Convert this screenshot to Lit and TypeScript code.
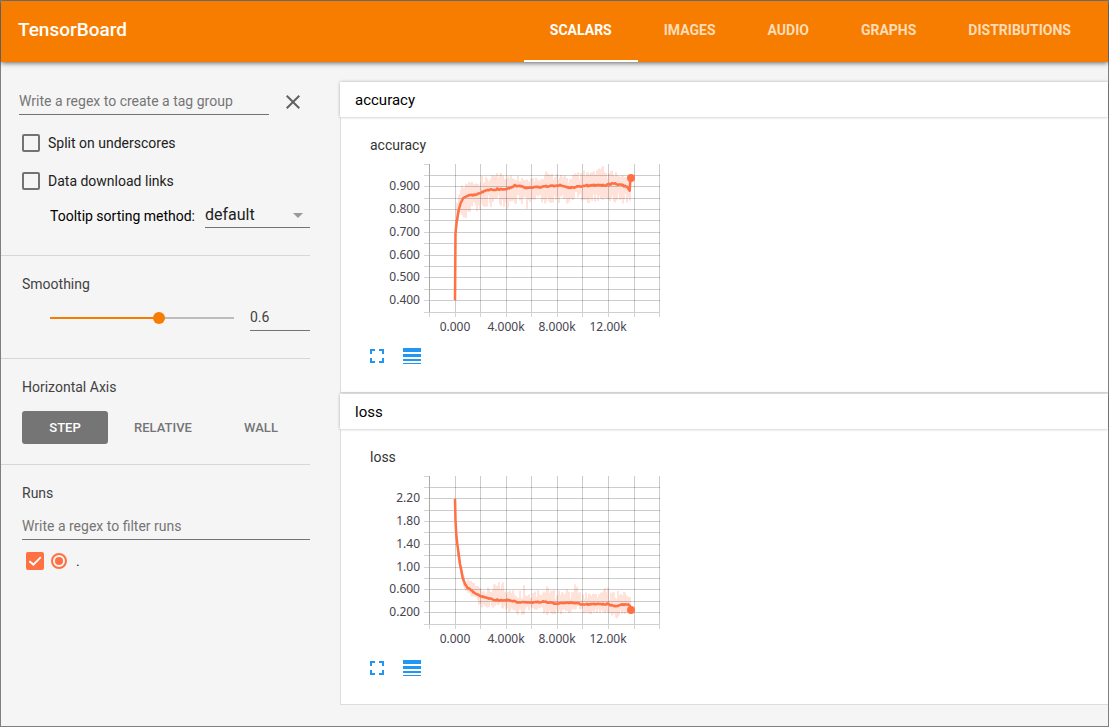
import { LitElement, html, css, svg } from "lit";
import { customElement, property, state } from "lit/decorators.js";
import { classMap } from "lit/directives/class-map.js";

type Point = [number, number];

interface ChartData {
  name: string;
  yLabels: string[];
  trend: Point[];
  upper: Point[];
  lower: Point[];
  wobble: number;
  floor: number;
}

const GRID_X = [59, 85, 110, 136, 161, 187, 212, 238, 264, 289];
const GRID_Y = [4, 15, 26, 38, 49, 60, 72, 83, 95, 106, 117, 129, 140, 152];
const X_LABELS = ["0.000", "4.000k", "8.000k", "12.00k"];

const CHARTS: ChartData[] = [
  {
    name: "accuracy",
    yLabels: ["0.900", "0.800", "0.700", "0.600", "0.500", "0.400"],
    trend: [
      [85, 140], [85.5, 73], [86.5, 63], [88.7, 50], [90.7, 43], [93.3, 38], [97, 36],
      [105, 34.5], [112, 32], [118, 30], [127, 29.3], [137, 29], [145, 25.7], [150, 25.7],
      [155, 28], [165, 27], [170, 27], [190, 25.3], [198, 27.3], [205, 27.3], [213, 25.7],
      [237, 25], [243, 23.5], [252, 25], [257, 26.7], [259.7, 30.7], [260.5, 18],
    ],
    upper: [
      [86, 60], [87, 42], [89, 30], [91, 24], [93, 18], [95, 24], [101, 21], [110, 22], [112, 9],
      [115, 17], [122, 15], [135, 9], [137, 15], [145, 14], [155, 16], [165, 16], [175, 15],
      [177, 4], [179, 13], [190, 14], [200, 16], [212, 10], [222, 11], [233, 5], [236, 12],
      [243, 10], [250, 13], [259, 16],
    ],
    lower: [
      [86, 76], [88, 64], [92, 57], [96, 59], [99, 53], [110, 53], [115, 48], [125, 47],
      [131, 50], [138, 49], [150, 42], [158, 51], [163, 43], [180, 44], [195, 44], [203, 47],
      [212, 41], [225, 45], [240, 42], [253, 46], [259, 42],
    ],
    wobble: 1.4,
    floor: 0.4,
  },
  {
    name: "loss",
    yLabels: ["2.20", "1.80", "1.40", "1.00", "0.600", "0.200"],
    trend: [
      [85, 27], [85.5, 48], [86.3, 63], [87.3, 72], [90, 92], [91.3, 98], [92.7, 106],
      [95, 112], [97.3, 115.7], [103, 119.7], [110.7, 124], [118, 126.3], [128, 128.3],
      [138, 128], [149, 130.3], [163, 130.3], [173, 129.7], [187, 131.7], [200, 130.3],
      [213, 132.3], [237, 132], [245, 134.3], [252, 132.7], [258, 132.3], [260, 134], [261, 138],
    ],
    upper: [
      [88, 74], [91, 92], [95, 105], [99, 108], [108, 112], [117, 116], [133, 107], [134, 118],
      [137, 106], [140, 117], [149, 117], [153, 116], [154, 105], [156, 118], [165, 116],
      [175, 112], [185, 118], [190, 118], [191, 106], [193, 120], [205, 111], [210, 120],
      [230, 120], [237, 113], [245, 121], [252, 114], [260, 124],
    ],
    lower: [
      [88, 88], [91, 108], [95, 118], [105, 128], [112, 138], [120, 135], [135, 139],
      [152, 144], [160, 138], [177, 143], [190, 143], [205, 141], [220, 142], [240, 143],
      [247, 147], [260, 141],
    ],
    wobble: 1.2,
    floor: 0.2,
  },
];

function valueAt(points: Point[], x: number): number {
  for (let i = 1; i < points.length; i++) {
    const [x1, y1] = points[i];
    if (x <= x1) {
      const [x0, y0] = points[i - 1];
      return y0 + ((y1 - y0) * (x - x0)) / (x1 - x0);
    }
  }
  return points[points.length - 1][1];
}

function noise(i: number): number {
  const v = Math.sin(i * 12.9898) * 43758.5453;
  return v - Math.floor(v);
}

function rawPath(c: ChartData): string {
  let d = "";
  for (let x = c.upper[0][0], i = 0; x <= 260; x += 1, i++) {
    const mid = valueAt(c.trend, x);
    const hi = valueAt(c.upper, x);
    const lo = valueAt(c.lower, x);
    const top = mid - (mid - hi) * (c.floor + (1 - c.floor) * noise(i));
    const bottom = mid + (lo - mid) * (0.25 + 0.75 * noise(i + 500));
    d += `M${x} ${top.toFixed(1)}V${bottom.toFixed(1)}`;
  }
  return d;
}

function trendPath(c: ChartData): string {
  let d = `M${c.trend[0].join(" ")}`;
  for (let k = 1; k < c.trend.length; k++) {
    const [x0, y0] = c.trend[k - 1];
    const [x1, y1] = c.trend[k];
    if (x0 > 94 && x1 < 259) {
      for (let x = Math.ceil(x0); x < x1; x++) {
        const y = y0 + ((y1 - y0) * (x - x0)) / (x1 - x0);
        d += `L${x} ${(y + (noise(x * 3) - 0.5) * c.wobble).toFixed(1)}`;
      }
    }
    d += `L${x1} ${y1}`;
  }
  return d;
}

@customElement("scalar-chart")
class ScalarChart extends LitElement {
  @property({ attribute: false }) data!: ChartData;

  static styles = css`
    :host { display: block; }
    .title { font: 400 14px/20px Roboto, sans-serif; color: #333; margin: 0; }
    .plot { display: block; margin-top: 5px; }
    .grid { stroke: #000; stroke-opacity: 0.2; }
    .axis { stroke: #a9a9a9; }
    .base { stroke: #cfcfcf; }
    .tick { stroke: #d4d4d4; }
    .label { font: 12px "Noto Sans", sans-serif; fill: #45444f; }
    .end { text-anchor: end; }
    .mid { text-anchor: middle; }
    .raw { stroke: #ffe2d9; stroke-width: 2; fill: none; }
    .trend { stroke: #ff7043; stroke-width: 2.5; fill: none; stroke-linejoin: round; }
    .dot { fill: #ff7043; }
  `;

  render() {
    const c = this.data;
    const last = c.trend[c.trend.length - 1];
    return html`
      <h3 class="title">${c.name}</h3>
      <svg class="plot" width="295" height="180" viewBox="0 0 295 180" role="img" aria-label=${c.name}>
        <path class="raw" d=${rawPath(c)} />
        ${GRID_Y.map((y, i) => svg`
          <path class="tick" d="M54 ${y + 0.5}H59" />
          ${i > 0 && i < 13 ? svg`<path class="grid" d="M59 ${y + 0.5}H290" />` : ""}`)}
        ${GRID_X.map((x, i) => svg`
          <path class="tick" d="M${x + 0.5} 152V157" />
          ${i > 0 ? svg`<path class="grid" d="M${x + 0.5} 4V152" />` : ""}`)}
        <path class="base" d="M59 152.5H290" />
        <path class="axis" d="M59.5 4V152" />
        ${c.yLabels.map((t, i) => svg`<text class="label end" x="50" y=${GRID_Y[2 + 2 * i] + 4}>${t}</text>`)}
        ${X_LABELS.map((t, i) => svg`<text class="label mid" x=${GRID_X[1 + 2 * i]} y="171">${t}</text>`)}
        <path class="trend" d=${trendPath(c)} />
        <circle class="dot" cx="261" cy=${last[1]} r="4" />
      </svg>
    `;
  }
}

@customElement("chart-pane")
class ChartPane extends LitElement {
  @property({ attribute: false }) data!: ChartData;

  static styles = css`
    :host { display: block; }
    .head {
      display: block; width: 100%; height: 35px; padding: 0 15px; border: 0;
      background: #fff; color: #000; text-align: left; font: 400 15px/20px Roboto, sans-serif;
      box-shadow: 0 0 3px rgba(0, 0, 0, 0.3); position: relative;
    }
    .body {
      box-sizing: border-box; height: 276px; padding: 18px 29px; background: #fff;
      border-left: 1px solid #ddd; border-bottom: 1px solid #ddd;
    }
    .tools { display: flex; gap: 11px; margin: 4px 0 0 -5px; }
    .tool { border: 0; background: none; padding: 0; width: 24px; height: 24px; color: #2196f3; }
    .icon { display: block; fill: currentColor; }
  `;

  render() {
    return html`
      <button class="head">${this.data.name}</button>
      <div class="body">
        <scalar-chart .data=${this.data}></scalar-chart>
        <div class="tools">
          <button class="tool" aria-label="Toggle full size">
            <svg class="icon" width="24" height="24" viewBox="0 0 24 24"><path d="M7 14H5v5h5v-2H7v-3zm-2-4h2V7h3V5H5v5zm12 7h-3v2h5v-5h-2v3zM14 5v2h3v3h2V5h-5z" /></svg>
          </button>
          <button class="tool" aria-label="Toggle log scale">
            <svg class="icon" width="24" height="24" viewBox="0 0 24 24"><path d="M3 17h18v-2H3v2zm0 3h18v-1H3v1zm0-7h18v-3H3v3zm0-9v4h18V4H3z" /></svg>
          </button>
        </div>
      </div>
    `;
  }
}

@customElement("app-root")
class AppRoot extends LitElement {
  @state() private tab = "SCALARS";
  @state() private axis = "STEP";
  @state() private smoothing = 0.6;

  static styles = css`
    :host { display: block; font: 400 14px/20px Roboto, sans-serif; color: #212121; }
    .frame {
      box-sizing: border-box; min-height: 100vh; border: 1px solid #7f7f7f; background: #f5f5f5;
      display: flex; flex-direction: column;
    }
    .header {
      height: 61px; padding: 0 11px 0 17px; background: #f77d00; color: #fff;
      display: flex; align-items: center; justify-content: space-between;
      box-shadow: 0 1px 5px rgba(0, 0, 0, 0.6); position: relative;
    }
    .brand { font-size: 19px; line-height: 24px; font-weight: 500; margin: 0; padding-bottom: 3px; }
    .tabs { display: flex; align-self: stretch; }
    .tab {
      border: 0; border-bottom: 2px solid transparent;
      background: none; padding: 0 26px 1px; color: #ffdcb8;
      font: 700 14px/20px Roboto, sans-serif;
    }
    .tab.on { color: #fff; border-bottom-color: #fff; }
    .columns { display: flex; flex: 1; gap: 30px; }
    .sidebar { width: 309px; flex: none; }
    .group { border-bottom: 1px solid #d6d6d6; padding: 18px 0 27px 21px; }
    .first { padding-top: 28px; }
    .last { border-bottom: 0; }
    .axis { padding-bottom: 20px; }
    .name { font: inherit; color: #424242; margin: 0 0 11px; }
    .axis .name { margin-bottom: 14px; }
    .row { display: flex; align-items: center; }
    .field {
      box-sizing: border-box; height: 26px; min-width: 0; padding: 0 0 2px; border: 0; border-radius: 0;
      border-bottom: 1px solid #737373; background: none; outline: none;
      font: inherit; color: #424242; appearance: none;
    }
    .field::placeholder { color: #757575; opacity: 1; }
    .tag-row { gap: 12px; margin: 0 4px 17px -3px; height: 24px; }
    .tag-row .field { width: 250px; }
    .close { border: 0; padding: 0; background: none; color: #616161; }
    .icon { display: block; }
    .check-row { gap: 8px; height: 24px; margin-bottom: 14px; }
    .tight { margin-bottom: 10px; }
    .box {
      appearance: none; box-sizing: border-box; width: 18px; height: 18px; margin: 0; flex: none;
      border: 2px solid #737373; border-radius: 2px; display: grid; place-items: center;
    }
    .box:checked { background: #ff7043; border-color: #ff7043; }
    .box:checked::after {
      content: ""; width: 13px; height: 10px; background: #fff;
      clip-path: polygon(12% 44%, 38% 72%, 90% 5%, 100% 18%, 38% 100%, 0 58%);
    }
    .radio {
      appearance: none; box-sizing: border-box; width: 16px; height: 16px; margin: 0;
      border: 2px solid #ff7043; border-radius: 50%; display: grid; place-items: center;
    }
    .radio:checked::after { content: ""; width: 8px; height: 8px; border-radius: 50%; background: #ff7043; }
    .sort-row { padding-left: 28px; height: 25px; justify-content: space-between; color: #000; }
    .select-wrap { display: grid; width: 105px; align-items: center; }
    .select { grid-area: 1 / 1; width: 100%; height: 25px; padding: 0; font-size: 16px; color: #212121; }
    .arrow { grid-area: 1 / 1; justify-self: end; margin-right: 7px; fill: #999; pointer-events: none; }
    .smooth-row { padding-left: 28px; gap: 16px; height: 26px; }
    .slider {
      appearance: none; flex: 1; min-width: 0; height: 12px; margin: 0; background:
        linear-gradient(#f77d00, #f77d00) left center / 60% 2px no-repeat,
        linear-gradient(#bdbdbd, #bdbdbd) center / 100% 2px no-repeat;
    }
    .slider::-webkit-slider-thumb {
      appearance: none; width: 12px; height: 12px; border-radius: 50%; background: #f77d00;
    }
    .number { width: 60px; }
    .modes { display: grid; grid-template-columns: repeat(3, 86px); gap: 12px; }
    .mode {
      height: 33px; padding: 0; border: 0; border-radius: 3px; background: none; color: #757575;
      font: 500 13px/20px Roboto, sans-serif;
    }
    .mode.on { background: #757575; color: #fff; }
    .wide { width: 100%; display: block; }
    .run-row { gap: 7px; height: 24px; margin: 9px 0 0 4px; }
    .dot-name { margin-left: 2px; }
    .content { flex: 1; min-width: 0; padding: 20px 0 21px; display: flex; flex-direction: column; gap: 1px; }
  `;

  render() {
    return html`
      <div class="frame">
        <header class="header">
          <h1 class="brand">TensorBoard</h1>
          <nav class="tabs">
            ${["SCALARS", "IMAGES", "AUDIO", "GRAPHS", "DISTRIBUTIONS"].map(
              (t) => html`<button class=${classMap({ tab: true, on: t === this.tab })} @click=${() => (this.tab = t)}>${t}</button>`
            )}
          </nav>
        </header>
        <div class="columns">
          <aside class="sidebar">
            <section class="group first">
              <div class="row tag-row">
                <input class="field" aria-label="Tag group regex" placeholder="Write a regex to create a tag group" />
                <button class="close" aria-label="Clear">
                  <svg class="icon" width="24" height="24" viewBox="0 0 24 24" fill="currentColor"><path d="M19 6.41L17.59 5 12 10.59 6.41 5 5 6.41 10.59 12 5 17.59 6.41 19 12 13.41 17.59 19 19 17.59 13.41 12z" /></svg>
                </button>
              </div>
              <label class="row check-row"><input class="box" type="checkbox" />Split on underscores</label>
              <label class="row check-row tight"><input class="box" type="checkbox" />Data download links</label>
              <div class="row sort-row">
                <label for="sort">Tooltip sorting method:</label>
                <div class="select-wrap">
                  <select class="field select" id="sort">
                    <option>default</option>
                    <option>descending</option>
                    <option>ascending</option>
                    <option>nearest</option>
                  </select>
                  <svg class="arrow" width="10" height="5" viewBox="0 0 10 5"><path d="M0 0h10L5 5z" /></svg>
                </div>
              </div>
            </section>
            <section class="group">
              <h2 class="name" id="smoothing">Smoothing</h2>
              <div class="row smooth-row">
                <input class="slider" type="range" min="0" max="1" step="0.1" aria-labelledby="smoothing"
                  .value=${String(this.smoothing)}
                  @input=${(e: Event) => (this.smoothing = Number((e.target as HTMLInputElement).value))} />
                <input class="field number" aria-labelledby="smoothing" .value=${String(this.smoothing)} />
              </div>
            </section>
            <section class="group axis">
              <h2 class="name">Horizontal Axis</h2>
              <div class="modes">
                ${["STEP", "RELATIVE", "WALL"].map(
                  (m) => html`<button class=${classMap({ mode: true, on: m === this.axis })} @click=${() => (this.axis = m)}>${m}</button>`
                )}
              </div>
            </section>
            <section class="group last">
              <h2 class="name">Runs</h2>
              <input class="field wide" aria-label="Filter runs" placeholder="Write a regex to filter runs" />
              <div class="row run-row">
                <input class="box" type="checkbox" id="run" checked />
                <input class="radio" type="radio" name="run" aria-label="Only this run" checked />
                <label class="dot-name" for="run">.</label>
              </div>
            </section>
          </aside>
          <main class="content">
            ${CHARTS.map((c) => html`<chart-pane .data=${c}></chart-pane>`)}
          </main>
        </div>
      </div>
    `;
  }
}
